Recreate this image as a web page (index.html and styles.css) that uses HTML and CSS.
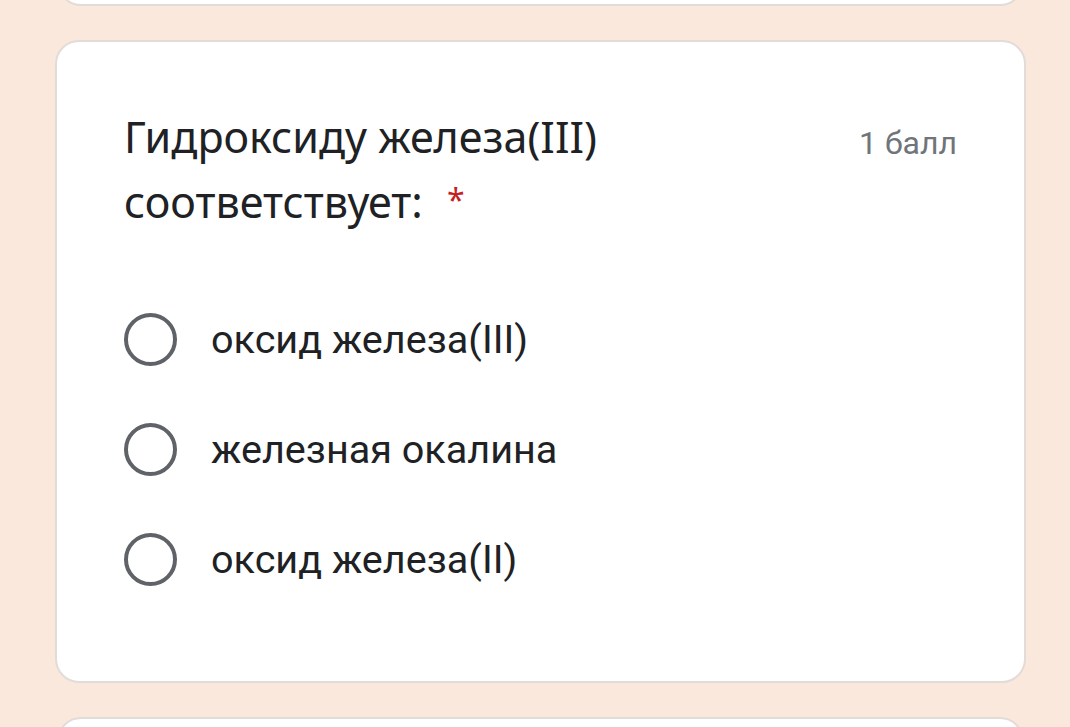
FILE: index.html
```html
<!DOCTYPE html>
<html lang="ru">
<head>
  <meta charset="UTF-8">
  <meta name="viewport" content="width=device-width, initial-scale=1.0">
  <title>Вопрос</title>
  <link rel="stylesheet" href="styles.css">
</head>
<body>
  <div class="page">
    <div class="card card-prev"></div>

    <div class="card question">
      <div class="question-head">
        <div class="question-title">Гидроксиду железа(III) соответствует:<span class="required">*</span></div>
        <div class="points">1 балл</div>
      </div>
      <div class="options">
        <label class="option">
          <span class="radio"></span>
          <span class="option-text">оксид железа(III)</span>
        </label>
        <label class="option">
          <span class="radio"></span>
          <span class="option-text">железная окалина</span>
        </label>
        <label class="option">
          <span class="radio"></span>
          <span class="option-text">оксид железа(II)</span>
        </label>
      </div>
    </div>

    <div class="card card-next"></div>
  </div>
</body>
</html>
```

FILE: styles.css
```css
/* базовые настройки */
body {
  margin: 0;
  padding: 0;
  background: #fbe8dc;
  font-family: 'Roboto', 'Liberation Sans', sans-serif;
  color: #202124;
  height: 727px;
  overflow: hidden;
}

.page {
  width: 971px;
  margin-left: 55px;
  display: flex;
  flex-direction: column;
  gap: 34px;
}

.card {
  background: #ffffff;
  border: 2px solid #e2dcd8;
  border-radius: 24px;
  box-sizing: border-box;
}

.card-prev {
  height: 100px;
  margin-top: -94px;
  margin-left: 2px;
  margin-right: 2px;
}

.card-next {
  height: 100px;
  margin-left: 2px;
  margin-right: 2px;
}

.question {
  height: 643px;
  padding: 62px 67px 0 67px;
}

.question-head {
  display: flex;
  justify-content: space-between;
  align-items: flex-start;
}

.question-title {
  width: 580px;
  font-family: 'Noto Sans', 'Roboto', sans-serif;
  font-size: 43px;
  line-height: 65px;
  color: #202124;
}

.required {
  display: inline-block;
  color: #c5221f;
  font-size: 32px;
  line-height: 32px;
  vertical-align: 6px;
  margin-left: 24px;
}

.points {
  font-size: 32px;
  line-height: 40px;
  color: #70757a;
  margin-top: 19px;
}

.options {
  display: flex;
  flex-direction: column;
  gap: 56px;
  margin-top: 78px;
}

.option {
  display: flex;
  align-items: center;
  gap: 34px;
  height: 54px;
}

.radio {
  width: 53px;
  height: 53px;
  border: 4px solid #5f6368;
  border-radius: 50%;
  box-sizing: border-box;
  flex-shrink: 0;
}

.option-text {
  font-size: 39.6px;
  color: #202124;
}
```
